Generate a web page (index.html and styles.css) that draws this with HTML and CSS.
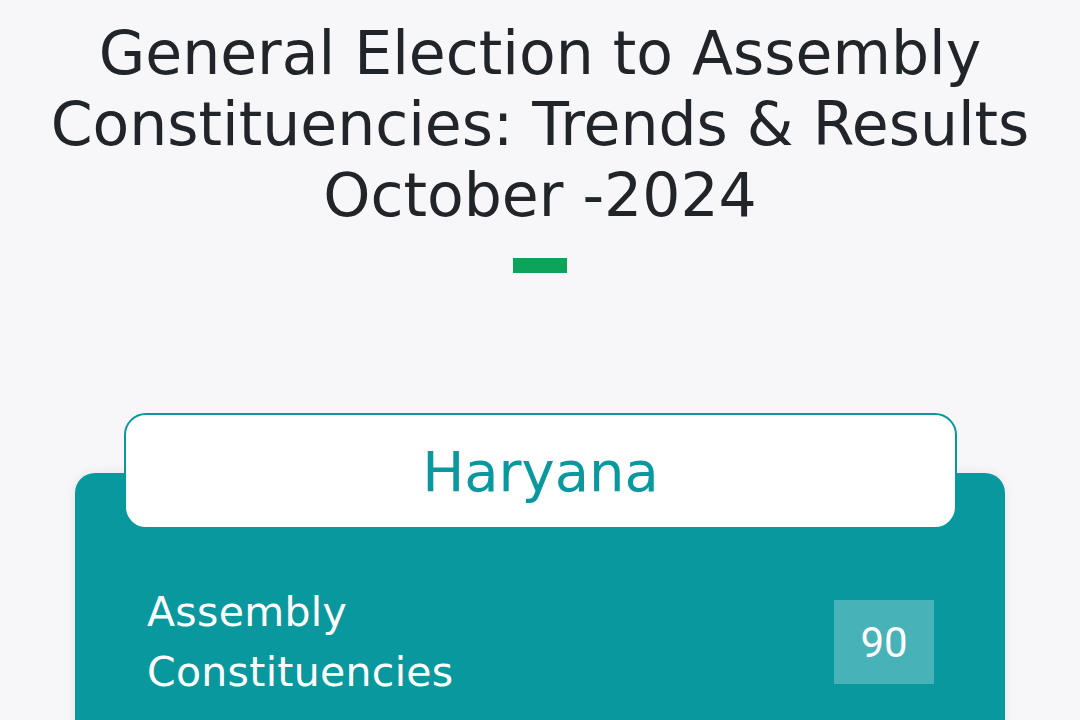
FILE: index.html
```html
<!DOCTYPE html>
<html lang="en">
<head>
<meta charset="utf-8">
<title>General Election to Assembly Constituencies</title>
<link rel="stylesheet" href="styles.css">
</head>
<body>
<header class="page-head">
  <h1 class="title">General Election to Assembly Constituencies: Trends &amp; Results October -2024</h1>
  <div class="accent"></div>
</header>
<main class="cards">
  <section class="state-card">
    <div class="state-tab"><h2 class="state-name">Haryana</h2></div>
    <div class="stat-row">
      <div class="stat-label">Assembly Constituencies</div>
      <div class="stat-value">90</div>
    </div>
  </section>
</main>
</body>
</html>
```
FILE: styles.css
```css
html, body {
  margin: 0;
  padding: 0;
  background: #f7f7fa;
}
body {
  font-family: "DejaVu Sans", "Noto Sans", sans-serif;
  color: #212529;
}
.page-head {
  display: flex;
  flex-direction: column;
  align-items: center;
  padding-top: 18px;
}
.title {
  margin: 0;
  width: 1040px;
  text-align: center;
  font-size: 60px;
  line-height: 71px;
  font-weight: 400;
  color: #212529;
  letter-spacing: 0;
}
.accent {
  width: 54px;
  height: 15px;
  background: #0ea35a;
  margin-top: 27px;
}
.cards {
  padding: 200px 75px 0;
}
.state-card {
  background: #0a989f;
  border-radius: 20px;
  box-shadow: 0 0 12px rgba(0,0,0,0.08);
  padding: 0 71px 40px 72px;
  display: flex;
  flex-direction: column;
}
.state-tab {
  margin: -60px -23px 0 -23px;
  background: #fff;
  border: 2px solid #0a989f;
  border-radius: 22px;
  height: 112px;
  display: flex;
  align-items: center;
  justify-content: center;
}
.state-name {
  margin: 0;
  font-size: 56px;
  font-weight: 400;
  color: #0a989f;
}
.stat-row {
  display: flex;
  align-items: center;
  justify-content: space-between;
  margin-top: 53px;
}
.stat-label {
  width: 380px;
  font-size: 41px;
  line-height: 60px;
  letter-spacing: 0.3px;
  color: #fff;
}
.stat-value {
  width: 100px;
  height: 84px;
  background: rgba(255,255,255,0.25);
  color: #fff;
  font-family: Roboto, "Liberation Sans", sans-serif;
  font-size: 42px;
  display: flex;
  align-items: center;
  justify-content: center;
}
```
